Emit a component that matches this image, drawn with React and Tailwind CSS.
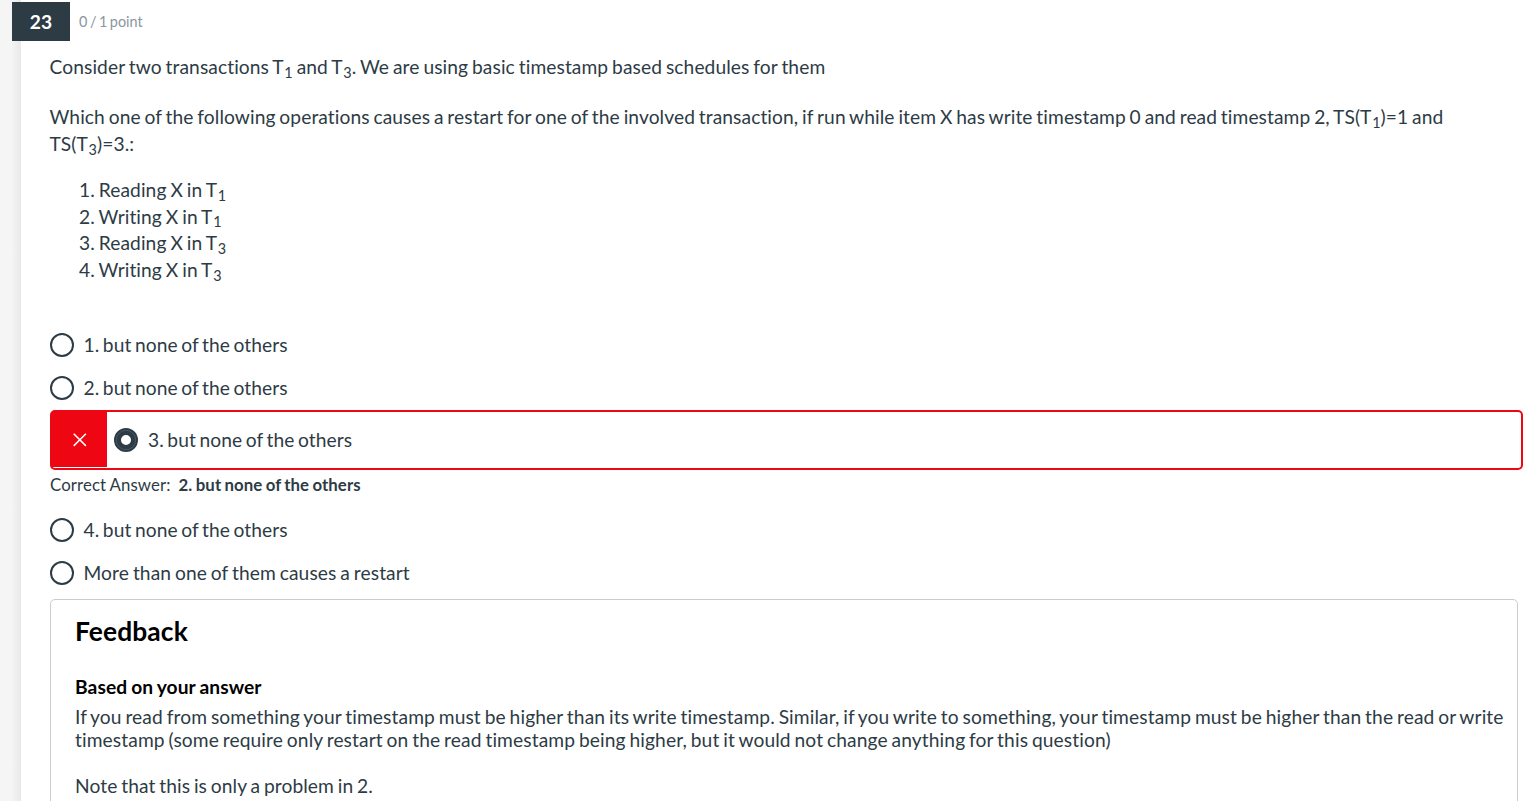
const steps = [
  { verb: "Reading", sub: 1 },
  { verb: "Writing", sub: 1 },
  { verb: "Reading", sub: 3 },
  { verb: "Writing", sub: 3 },
];

function Sub({ children }) {
  return <sub className="relative ml-[0.6px] text-[75%] leading-none">{children}</sub>;
}

function Option({ children, spacing = "[word-spacing:-1.5px]" }) {
  return (
    <label className="flex h-[43px] items-center gap-[9.5px]">
      <span className="size-6 shrink-0 rounded-full border-2 border-[#2d3b45]" />
      <span className={spacing}>{children}</span>
    </label>
  );
}

function WrongAnswer({ children }) {
  return (
    <div className="flex h-[60px] w-[1473px] rounded-[5px] border-2 border-[#ee0612] bg-white">
      <div className="flex h-[55px] w-[55px] items-center justify-center bg-[#ee0612]">
        <svg width="14" height="14" viewBox="0 0 14 14" stroke="#fff" strokeWidth="1.5" fill="none">
          <path d="M0.7 0.7 L12.9 12.9 M12.9 0.7 L0.7 12.9" />
        </svg>
      </div>
      <label className="flex items-center gap-[10px] pl-[7px]">
        <svg width="24" height="24" viewBox="0 0 24 24" fill="none">
          <circle cx="12" cy="12" r="8.5" stroke="#2d3b45" strokeWidth="7" />
          <circle cx="12" cy="12" r="9.7" stroke="#56626a" strokeWidth="0.7" />
        </svg>
        <span className="pb-[2px] [word-spacing:-1.5px]">{children}</span>
      </label>
    </div>
  );
}

export default function App() {
  return (
    <div className="flex h-[801px] w-[1533px] overflow-hidden bg-white font-['Lato',sans-serif] text-[19.2px] leading-[27px] tracking-[0.09px] text-[#2d3b45] [font-variant-ligatures:none] [word-spacing:-1.2px]">
      <div className="w-[21px] shrink-0 bg-linear-to-r from-[#f5f5f5] from-55% to-[#e8e8e8]" />
      <main className="flex min-w-0 flex-1 flex-col">
        <header className="relative -ml-[9px] mt-[2px] flex h-[39px] shrink-0 items-center gap-[9px]">
          <span className="flex h-[39px] w-[58px] items-center justify-center bg-[#2d3b45] text-[19.2px] font-bold text-white">23</span>
          <span className="text-[14.4px] tracking-[0.03px] text-[#8b969e]">0 / 1 point</span>
        </header>
        <div className="flex flex-col pl-[29px]">
          <p className="-ml-[0.5px] mt-3 h-[27px] whitespace-nowrap [word-spacing:-1.1px]">
            Consider two transactions T<Sub>1</Sub> and T<Sub>3</Sub>. We are using basic timestamp based schedules for them
          </p>
          <p className="-ml-[0.5px] mt-[23px] h-[54px] whitespace-nowrap">
            Which one of the following operations causes a restart for one of the involved transaction, if run while item X has write timestamp 0 and read timestamp 2, TS(T<Sub>1</Sub>)=1 and
            <br />
            TS(T<Sub>3</Sub>)=3.:
          </p>
          <ol className="mt-5 h-[107px] pl-[29px] leading-[26.67px] [word-spacing:-1.1px]">
            {steps.map((s, i) => (
              <li key={i}>
                {i + 1}. {s.verb} X in T<Sub>{s.sub}</Sub>
              </li>
            ))}
          </ol>
          <div className="mt-[39px] flex flex-col">
            <Option>1. but none of the others</Option>
            <Option>2. but none of the others</Option>
            <div className="h-px" />
            <WrongAnswer>3. but none of the others</WrongAnswer>
            <p className="flex h-[38px] gap-2 pt-px text-[16.8px]">
              <span className="tracking-[0.12px] [word-spacing:-0.5px]">Correct Answer:</span>
              <b className="[word-spacing:-0.9px]">2. but none of the others</b>
            </p>
            <Option>4. but none of the others</Option>
            <Option spacing="[word-spacing:-1.1px]">More than one of them causes a restart</Option>
          </div>
          <section className="mt-[5px] h-[220px] w-[1468px] rounded-[5px] border border-[#c7cdd1] pl-6 pt-[13px]">
            <h2 className="h-9 text-[26.4px] font-bold leading-9 text-black">Feedback</h2>
            <h3 className="mt-6 h-[27px] font-bold text-black [word-spacing:-0.8px]">Based on your answer</h3>
            <p className="mt-[5px] whitespace-nowrap leading-[23px] tracking-[0.113px]">
              If you read from something your timestamp must be higher than its write timestamp. Similar, if you write to something, your timestamp must be higher than the read or write
              <br />
              timestamp (some require only restart on the read timestamp being higher, but it would not change anything for this question)
            </p>
            <p className="mt-[23px] leading-[23px]">Note that this is only a problem in 2.</p>
          </section>
        </div>
      </main>
    </div>
  );
}
